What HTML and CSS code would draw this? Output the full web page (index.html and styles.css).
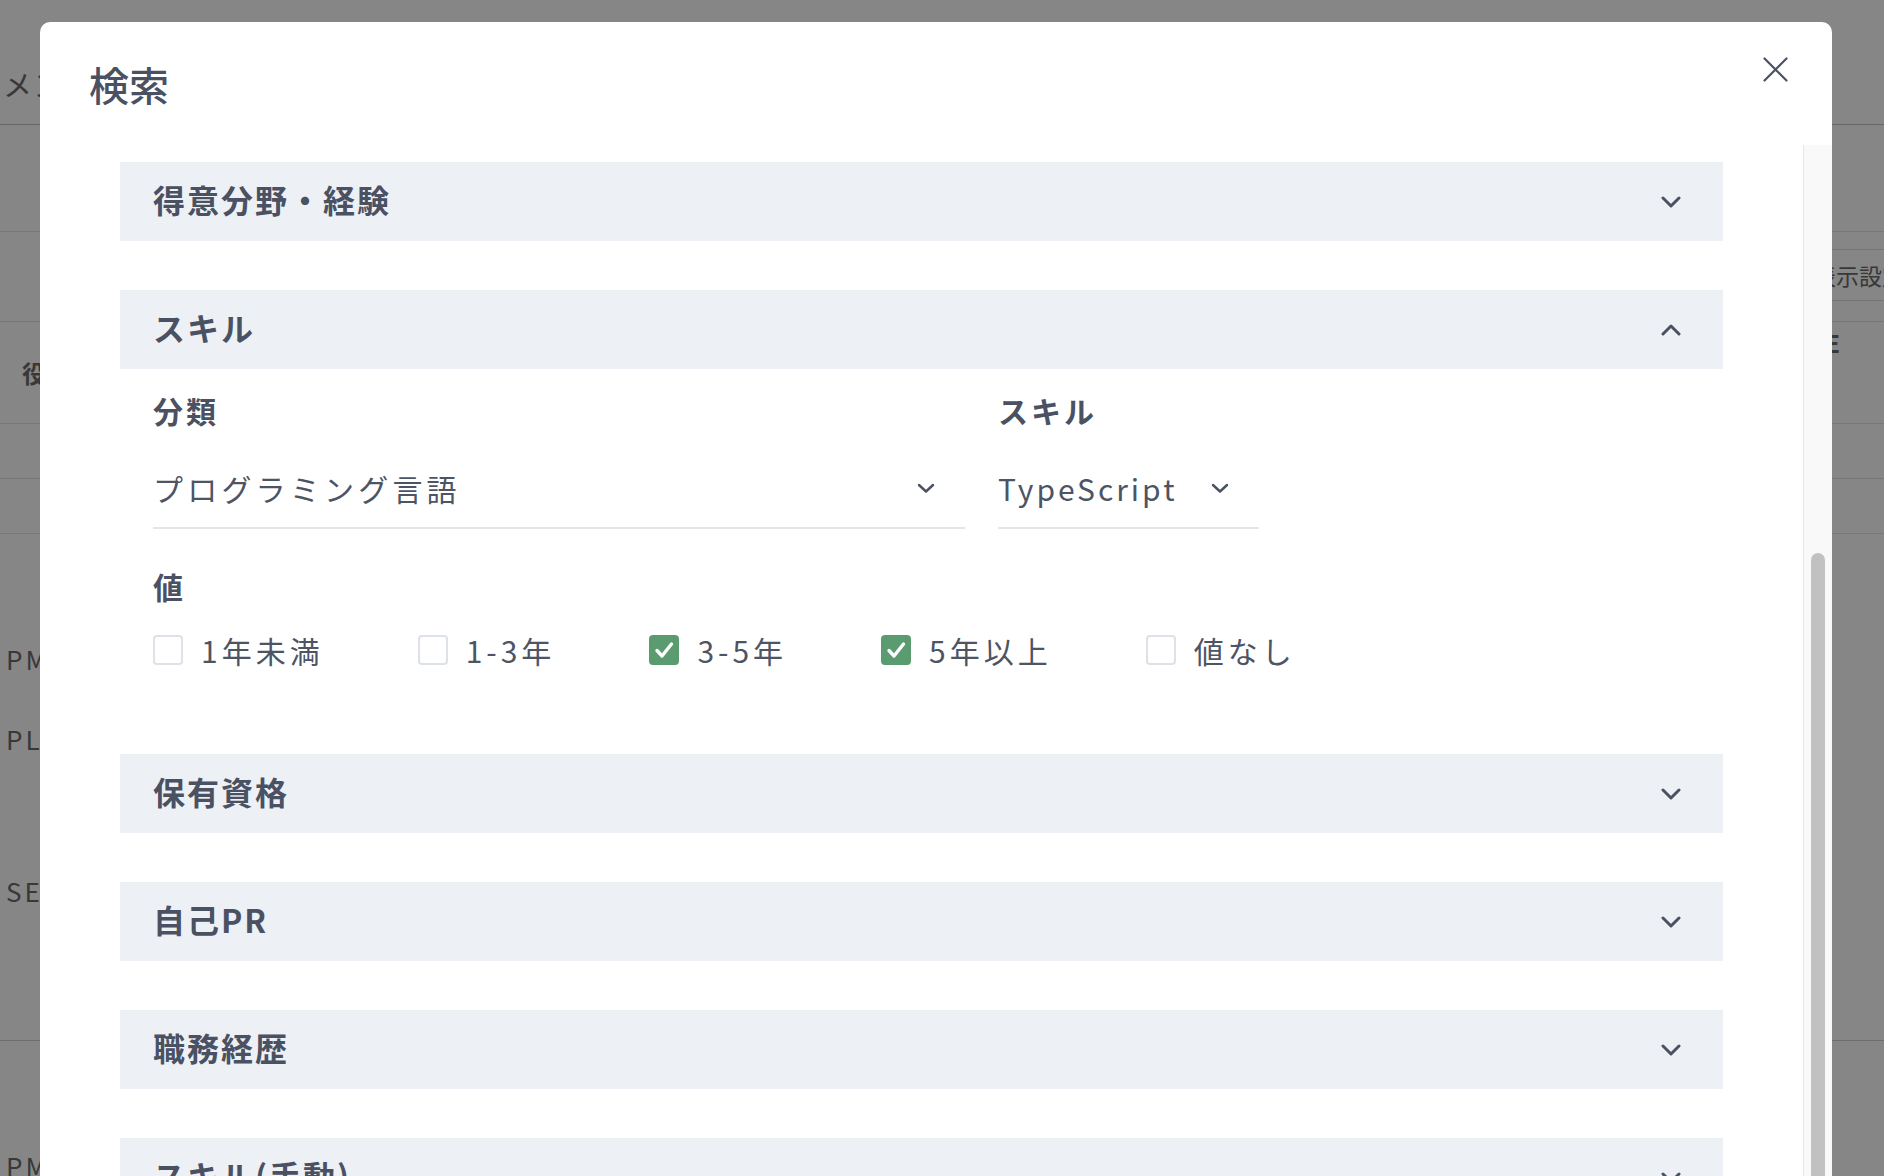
FILE: index.html
```html
<!DOCTYPE html>
<html lang="ja">
<head>
<meta charset="utf-8">
<title>検索</title>
<link rel="stylesheet" href="styles.css">
</head>
<body>
<div class="page">
  <div class="topbar">メンバー一覧</div>
  <div class="filterbar"></div>
  <div class="toolbar"><span class="btn">表示設定</span></div>
  <div class="thead"><span class="th-left">役割</span><span class="th-right">STAGE</span></div>
  <div class="row-s"></div>
  <div class="row-s"></div>
  <div class="row-tall">
    <span class="role role-pm">PM</span>
    <span class="role role-pl">PL</span>
    <span class="role role-se">SE</span>
  </div>
  <div class="row-last"><span class="role">PM</span></div>
</div>

<div class="overlay">
  <div class="modal">
    <div class="modal-head">
      <h1 class="modal-title">検索</h1>
      <svg class="close" viewBox="0 0 25 25" aria-label="閉じる">
        <path d="M1.5 1.5 L23.5 23.5 M23.5 1.5 L1.5 23.5" stroke="#4a5163" stroke-width="2.2" stroke-linecap="round" fill="none"/>
      </svg>
    </div>
    <div class="modal-body">
      <div class="content">
        <section class="section">
          <div class="sec-head">
            <span class="sec-title">得意分野・経験</span>
            <svg class="chev" viewBox="0 0 20 12"><path d="M2 2 L10 10 L18 2" stroke="#4a5163" stroke-width="3" fill="none" stroke-linecap="round" stroke-linejoin="round"/></svg>
          </div>
        </section>

        <section class="section">
          <div class="sec-head">
            <span class="sec-title">スキル</span>
            <svg class="chev" viewBox="0 0 20 12"><path d="M2 10 L10 2 L18 10" stroke="#4a5163" stroke-width="3" fill="none" stroke-linecap="round" stroke-linejoin="round"/></svg>
          </div>
          <div class="sec-body">
            <div class="fields">
              <div class="field field-wide">
                <div class="label">分類</div>
                <div class="select">
                  <span class="select-text select-text-jp">プログラミング言語</span>
                  <svg class="schev" viewBox="0 0 18 10"><path d="M2 2 L9 8.5 L16 2" stroke="#4a5163" stroke-width="2.4" fill="none" stroke-linecap="round" stroke-linejoin="round"/></svg>
                </div>
              </div>
              <div class="field">
                <div class="label">スキル</div>
                <div class="select select-auto">
                  <span class="select-text">TypeScript</span>
                  <svg class="schev" viewBox="0 0 18 10"><path d="M2 2 L9 8.5 L16 2" stroke="#4a5163" stroke-width="2.4" fill="none" stroke-linecap="round" stroke-linejoin="round"/></svg>
                </div>
              </div>
            </div>
            <div class="label value-label">値</div>
            <div class="checks">
              <label class="check"><span class="box"></span><span>1年未満</span></label>
              <label class="check"><span class="box"></span><span>1-3年</span></label>
              <label class="check"><span class="box on"><svg viewBox="0 0 30 30" class="tick"><path d="M8 15.5 L13 21 L22.5 9" stroke="#fff" stroke-width="3.4" fill="none" stroke-linecap="round" stroke-linejoin="round"/></svg></span><span>3-5年</span></label>
              <label class="check"><span class="box on"><svg viewBox="0 0 30 30" class="tick"><path d="M8 15.5 L13 21 L22.5 9" stroke="#fff" stroke-width="3.4" fill="none" stroke-linecap="round" stroke-linejoin="round"/></svg></span><span>5年以上</span></label>
              <label class="check"><span class="box"></span><span>値なし</span></label>
            </div>
          </div>
        </section>

        <section class="section">
          <div class="sec-head">
            <span class="sec-title">保有資格</span>
            <svg class="chev" viewBox="0 0 20 12"><path d="M2 2 L10 10 L18 2" stroke="#4a5163" stroke-width="3" fill="none" stroke-linecap="round" stroke-linejoin="round"/></svg>
          </div>
        </section>

        <section class="section">
          <div class="sec-head">
            <span class="sec-title">自己PR</span>
            <svg class="chev" viewBox="0 0 20 12"><path d="M2 2 L10 10 L18 2" stroke="#4a5163" stroke-width="3" fill="none" stroke-linecap="round" stroke-linejoin="round"/></svg>
          </div>
        </section>

        <section class="section">
          <div class="sec-head">
            <span class="sec-title">職務経歴</span>
            <svg class="chev" viewBox="0 0 20 12"><path d="M2 2 L10 10 L18 2" stroke="#4a5163" stroke-width="3" fill="none" stroke-linecap="round" stroke-linejoin="round"/></svg>
          </div>
        </section>

        <section class="section">
          <div class="sec-head">
            <span class="sec-title">スキル(手動)</span>
            <svg class="chev" viewBox="0 0 20 12"><path d="M2 2 L10 10 L18 2" stroke="#4a5163" stroke-width="3" fill="none" stroke-linecap="round" stroke-linejoin="round"/></svg>
          </div>
        </section>
      </div>
      <div class="scrollbar"><div class="thumb"></div></div>
    </div>
  </div>
</div>
</body>
</html>
```

FILE: styles.css
```css
* { box-sizing: border-box; }

html, body {
  margin: 0;
  padding: 0;
}

body {
  width: 1884px;
  height: 1176px;
  overflow: hidden;
  background: #ffffff;
  font-family: "Noto Sans CJK JP", "Noto Sans", sans-serif;
  color: #4a5163;
}

/* ---------- background page ---------- */
.page {
  width: 1884px;
  height: 1176px;
  overflow: hidden;
  color: #6b6b6b;
}

.topbar {
  height: 125px;
  border-bottom: 1px solid #c4c4c4;
  padding: 64px 0 0 3px;
  font-size: 29px;
  line-height: 40px;
  letter-spacing: 1px;
  white-space: nowrap;
}

.filterbar {
  height: 107px;
  border-bottom: 1px solid #e2e2e2;
}

.toolbar {
  height: 90px;
  border-bottom: 1px solid #e2e2e2;
  display: flex;
  justify-content: flex-end;
  padding-top: 17px;
  overflow: hidden;
}

.btn {
  flex: none;
  width: 160px;
  height: 52px;
  margin-right: -66px;
  border: 1px solid #dcdcdc;
  padding-left: 22px;
  font-size: 23px;
  line-height: 50px;
  white-space: nowrap;
}

.thead {
  height: 102px;
  border-bottom: 1px solid #e2e2e2;
  display: flex;
  justify-content: space-between;
  align-items: flex-start;
  font-weight: 700;
  font-size: 24px;
  overflow: hidden;
}

.th-left {
  padding: 31px 0 0 22px;
  line-height: 40px;
}

.th-right {
  padding-top: 9px;
  line-height: 24px;
  margin-right: 44px;
}

.row-s {
  height: 55px;
  border-bottom: 1px solid #e2e2e2;
}

.row-tall {
  height: 507px;
  border-bottom: 1px solid #cfcfcf;
  padding: 105px 0 0 6px;
  font-size: 26px;
  line-height: 40px;
  letter-spacing: 3px;
}

.role { display: block; }
.role-pl { margin-top: 40px; }
.role-se { margin-top: 112px; }

.row-last {
  padding: 105px 0 0 6px;
  font-size: 26px;
  line-height: 40px;
  letter-spacing: 3px;
}

/* ---------- overlay + modal ---------- */
.overlay {
  position: fixed;
  inset: 0;
  background: rgba(0, 0, 0, 0.475);
  padding: 22px 0 0 40px;
  overflow: hidden;
}

.modal {
  width: 1792px;
  height: 1300px;
  background: #ffffff;
  border-radius: 10px 10px 0 0;
  display: flex;
  flex-direction: column;
}

.modal-head {
  display: flex;
  justify-content: space-between;
  align-items: flex-start;
  padding: 34px 44px 33px 49px;
}

.modal-title {
  margin: 0;
  font-size: 40px;
  line-height: 56px;
  font-weight: 500;
  color: #4a5163;
}

.close {
  width: 25px;
  height: 25px;
  display: block;
  margin-top: 1px;
}

.modal-body {
  display: flex;
  flex: 1;
  min-height: 0;
}

.content {
  flex: 1;
  padding: 17px 80px 0 80px;
}

.scrollbar {
  width: 29px;
  flex: none;
  background: #f9f9f9;
  border-left: 1px solid #e8e8e8;
  padding-top: 408px;
}

.thumb {
  width: 14px;
  height: 900px;
  margin-left: 7px;
  background: #c1c1c1;
  border-radius: 7px;
}

/* sections */
.section + .section { margin-top: 49px; }

.sec-head {
  height: 79px;
  background: #edf0f5;
  display: flex;
  align-items: center;
  justify-content: space-between;
  padding: 0 42px 5px 33px;
}

.sec-title {
  font-size: 32px;
  font-weight: 700;
  letter-spacing: 2px;
  line-height: 44px;
  color: #4a5163;
}

.chev {
  width: 20px;
  height: 12px;
  display: block;
  margin-top: 5px;
}

.sec-body {
  padding: 18.5px 33px 33px;
}

.fields {
  display: flex;
  gap: 33px;
  align-items: flex-start;
}

.field-wide { width: 812px; }

.label {
  font-size: 30px;
  font-weight: 700;
  letter-spacing: 3px;
  line-height: 44px;
  color: #4a5163;
}

.select {
  display: flex;
  align-items: center;
  justify-content: space-between;
  margin-top: 12px;
  padding: 22px 30px 17px 0;
  border-bottom: 2px solid #e3e5e9;
  font-size: 30px;
  line-height: 44px;
  letter-spacing: 3px;
  color: #4d5464;
}

.select-text-jp { letter-spacing: 4.2px; }

.select-auto {
  justify-content: flex-start;
  gap: 34px;
}

.schev {
  width: 18px;
  height: 10px;
  display: block;
  flex: none;
}

.value-label { margin-top: 35px; }

.checks {
  display: flex;
  gap: 94px;
  margin-top: 20.5px;
}

.check {
  display: flex;
  align-items: center;
  gap: 18px;
  font-size: 30px;
  line-height: 44px;
  letter-spacing: 4px;
  color: #4d5464;
}

.box {
  width: 30px;
  height: 30px;
  flex: none;
  border: 2px solid #dde1e8;
  border-radius: 4px;
  background: #ffffff;
}

.box.on {
  background: #5a9b6f;
  border-color: #5a9b6f;
  display: flex;
  align-items: center;
  justify-content: center;
}

.tick {
  width: 30px;
  height: 30px;
  display: block;
  flex: none;
}
```
